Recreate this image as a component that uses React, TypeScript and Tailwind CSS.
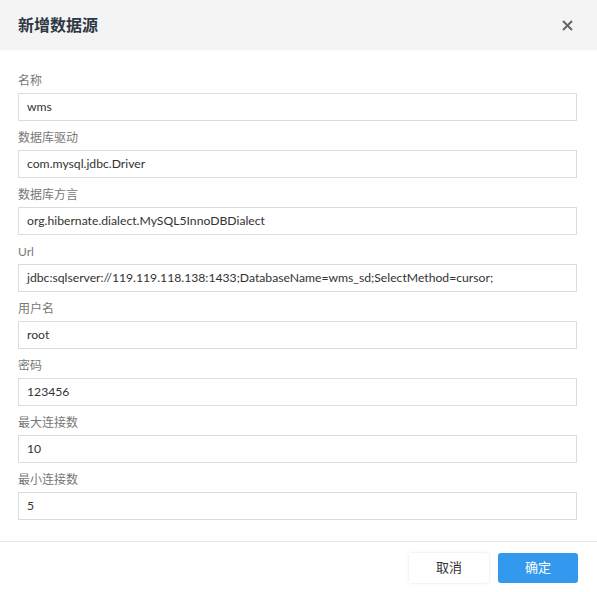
import React from "react";

const fields: { label: string; value: string }[] = [
  { label: "名称", value: "wms" },
  { label: "数据库驱动", value: "com.mysql.jdbc.Driver" },
  { label: "数据库方言", value: "org.hibernate.dialect.MySQL5InnoDBDialect" },
  { label: "Url", value: "jdbc:sqlserver://119.119.118.138:1433;DatabaseName=wms_sd;SelectMethod=cursor;" },
  { label: "用户名", value: "root" },
  { label: "密码", value: "123456" },
  { label: "最大连接数", value: "10" },
  { label: "最小连接数", value: "5" },
];

const font = { fontFamily: 'Lato, "Noto Sans CJK SC", sans-serif' };

export default function App() {
  return (
    <div className="w-[597px] h-[592px] bg-white flex flex-col" style={font}>
      <div className="h-[50px] bg-[#f4f4f4] flex items-center justify-between pl-[18px] pr-[24px]">
        <h1 className="text-[16px] font-bold text-[#2f3845]">新增数据源</h1>
        <svg width="11" height="11" viewBox="0 0 11 11" className="text-[#666]">
          <path d="M1 1 L10 10 M10 1 L1 10" stroke="currentColor" strokeWidth="2" />
        </svg>
      </div>
      <div className="flex flex-col gap-[7px] pt-[21px] pb-[21px] pl-[18px] pr-[20px] border-b border-[#e8e8e8]">
        {fields.map((f) => (
          <div key={f.label} className="flex flex-col gap-[2px]">
            <label className="h-[20px] leading-[20px] text-[12px] text-[#777]">{f.label}</label>
            <div className="h-[28px] border border-[#dcdcdc] flex items-center px-[8px] text-[12.2px] text-[#333] whitespace-nowrap overflow-hidden">
              {f.value}
            </div>
          </div>
        ))}
      </div>
      <div className="flex justify-end gap-[9px] pt-[11px] pr-[19px]">
        <button className="w-[80px] h-[30px] bg-white rounded-[2px] shadow-[0_0_3px_rgba(0,0,0,0.12)] text-[13px] text-[#333]">
          取消
        </button>
        <button className="w-[80px] h-[30px] bg-[#3399ee] rounded-[3px] text-[13px] text-white">
          确定
        </button>
      </div>
    </div>
  );
}
